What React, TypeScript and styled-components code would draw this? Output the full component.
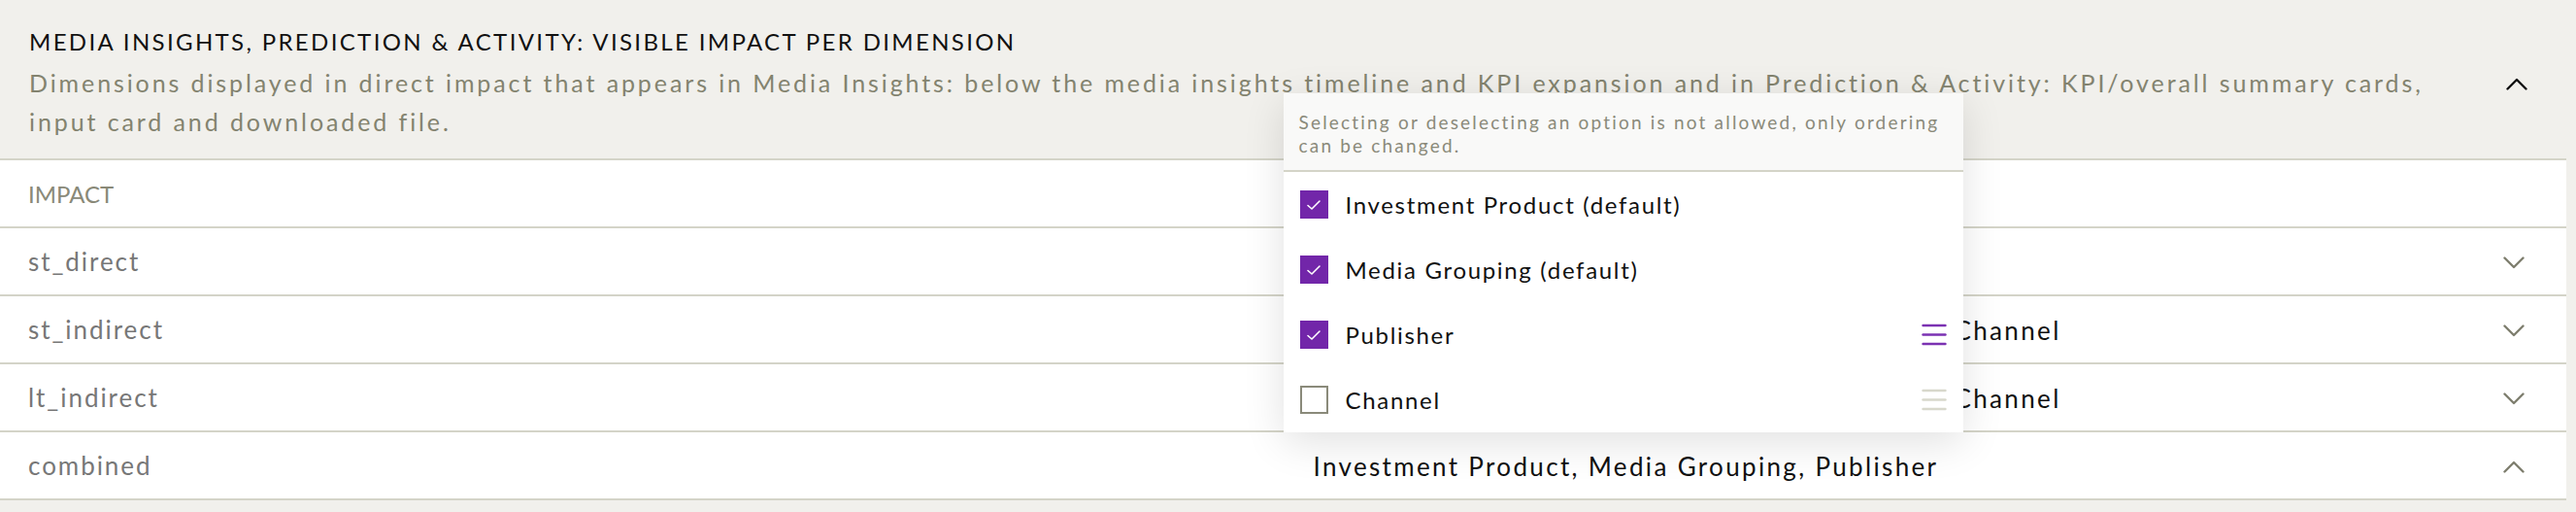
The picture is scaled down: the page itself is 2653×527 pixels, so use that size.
import React from "react";
import styled, { createGlobalStyle } from "styled-components";

const GlobalStyle = createGlobalStyle`
  html, body { margin: 0; padding: 0; }
  body {
    background: #f1f0ec;
    font-family: Lato, "Liberation Sans", sans-serif;
    color: #111111;
    -webkit-font-smoothing: antialiased;
  }
`;

const Page = styled.div`
  min-height: 100vh;
  padding-right: 10px;
  box-sizing: border-box;
  background: #f1f0ec;
`;

const Card = styled.section`
  display: flex;
  flex-direction: column;
`;

const Header = styled.header`
  display: flex;
  align-items: center;
  gap: 50px;
  padding: 27px 40px 18px 30px;
  border-bottom: 2px solid #d4d4c8;
`;

const HeaderText = styled.div`
  flex: 1;
  display: flex;
  flex-direction: column;
  gap: 6px;
`;

const Title = styled.h2`
  margin: 0;
  font-size: 24px;
  line-height: 32px;
  font-weight: 400;
  letter-spacing: 0.098em;
  color: #111111;
  text-transform: uppercase;
`;

const Description = styled.p`
  margin: 0;
  font-size: 25px;
  line-height: 40px;
  letter-spacing: 0.116em;
  color: #83836f;
`;

const Table = styled.div`
  display: flex;
  flex-direction: column;
  background: #ffffff;
`;

const Row = styled.div`
  display: grid;
  grid-template-columns: 1fr 1fr;
  height: 70px;
  border-bottom: 2px solid #d4d4c8;
  box-sizing: border-box;
`;

const HeadCell = styled.div`
  display: flex;
  align-items: center;
  padding-left: 29px;
  font-size: 24px;
  letter-spacing: 0;
  color: #898978;
  text-transform: uppercase;
`;

const LabelCell = styled.div`
  display: flex;
  align-items: center;
  padding-left: 29px;
  font-size: 26px;
  letter-spacing: 0.075em;
  color: #777777;
`;

const ValueCell = styled.div`
  position: relative;
  display: flex;
  align-items: center;
  justify-content: space-between;
  padding: 2px 43px 0 31px;
  font-size: 26px;
  letter-spacing: 0.09em;
  color: #111111;
`;

const ValueText = styled.span`
  white-space: nowrap;
`;

const ChevronSvg = styled.svg<{ $dark?: boolean }>`
  width: 22px;
  height: 13px;
  flex: none;
  stroke: ${(p) => (p.$dark ? "#111111" : "#7e7e6e")};
`;

const Dropdown = styled.div`
  position: absolute;
  left: 0;
  bottom: 100%;
  width: 700px;
  background: #ffffff;
  box-shadow: 0 10px 40px rgba(0, 0, 0, 0.12);
  display: flex;
  flex-direction: column;
  z-index: 2;
`;

const DropdownNote = styled.div`
  padding: 18px 8px 13px 16px;
  background: #f9f9f8;
  border-bottom: 2px solid #d4d4c8;
  font-size: 19px;
  line-height: 24px;
  letter-spacing: 0.115em;
  color: #8a8a7a;
`;

const OptionList = styled.ul`
  list-style: none;
  margin: 0;
  padding: 0;
`;

const Option = styled.li`
  display: flex;
  align-items: center;
  height: 67px;
  padding: 0 17px;
  gap: 18px;
  font-size: 24px;
  letter-spacing: 0.07em;
  color: #111111;
`;

const OptionLabel = styled.span`
  flex: 1;
`;

const Checkbox = styled.span<{ $checked: boolean }>`
  width: 29px;
  height: 29px;
  box-sizing: border-box;
  flex: none;
  display: flex;
  align-items: center;
  justify-content: center;
  background: ${(p) => (p.$checked ? "#7226a9" : "#ffffff")};
  border: 2px solid ${(p) => (p.$checked ? "#7226a9" : "#8a8a7a")};
`;

const HandleSvg = styled.svg<{ $active: boolean }>`
  width: 26px;
  height: 25px;
  flex: none;
  stroke: ${(p) => (p.$active ? "#7b32b2" : "#d8d8cc")};
`;

const Chevron = ({ up, dark }: { up?: boolean; dark?: boolean }) => (
  <ChevronSvg $dark={dark} viewBox="0 0 22 13" fill="none" strokeWidth={2.4} strokeLinecap="round" strokeLinejoin="round">
    {up ? <polyline points="1.5,11.5 11,2 20.5,11.5" /> : <polyline points="1.5,1.5 11,11 20.5,1.5" />}
  </ChevronSvg>
);

const Handle = ({ active }: { active: boolean }) => (
  <HandleSvg $active={active} viewBox="0 0 26 25" fill="none" strokeWidth={2.4} strokeLinecap="round">
    <line x1="1.5" y1="3" x2="24.5" y2="3" />
    <line x1="1.5" y1="12.5" x2="24.5" y2="12.5" />
    <line x1="1.5" y1="22" x2="24.5" y2="22" />
  </HandleSvg>
);

type Opt = { label: string; checked: boolean; draggable: boolean; active?: boolean };

const options: Opt[] = [
  { label: "Investment Product (default)", checked: true, draggable: false },
  { label: "Media Grouping (default)", checked: true, draggable: false },
  { label: "Publisher", checked: true, draggable: true, active: true },
  { label: "Channel", checked: false, draggable: true, active: false },
];

const rows = [
  { label: "st_direct", value: "Investment Product, Media Grouping", open: false },
  { label: "st_indirect", value: "Investment Product, Media Grouping, Publisher, Channel", open: false },
  { label: "lt_indirect", value: "Investment Product, Media Grouping, Publisher, Channel", open: false },
  { label: "combined", value: "Investment Product, Media Grouping, Publisher", open: true },
];

const OrderDropdown = () => (
  <Dropdown>
    <DropdownNote>
      Selecting or deselecting an option is not allowed, only ordering can be changed.
    </DropdownNote>
    <OptionList>
      {options.map((o) => (
        <Option key={o.label}>
          <Checkbox $checked={o.checked}>
            {o.checked && (
              <svg width="20" height="20" viewBox="0 0 20 20" fill="none" stroke="#ffffff" strokeWidth="1.6" strokeLinecap="round" strokeLinejoin="round">
                <polyline points="4,10.5 8,14 16,6" />
              </svg>
            )}
          </Checkbox>
          <OptionLabel>{o.label}</OptionLabel>
          {o.draggable && <Handle active={!!o.active} />}
        </Option>
      ))}
    </OptionList>
  </Dropdown>
);

export default function App() {
  return (
    <>
      <GlobalStyle />
      <Page>
        <Card>
          <Header>
            <HeaderText>
              <Title>Media Insights, Prediction &amp; Activity: Visible Impact per Dimension</Title>
              <Description>
                Dimensions displayed in direct impact that appears in Media Insights: below the media insights timeline
                and KPI expansion and in Prediction &amp; Activity: KPI/overall summary cards, input card and downloaded
                file.
              </Description>
            </HeaderText>
            <Chevron up dark />
          </Header>
          <Table>
            <Row>
              <HeadCell>Impact</HeadCell>
            </Row>
            {rows.map((r) => (
              <Row key={r.label}>
                <LabelCell>{r.label}</LabelCell>
                <ValueCell>
                  <ValueText>{r.value}</ValueText>
                  <Chevron up={r.open} />
                  {r.open && <OrderDropdown />}
                </ValueCell>
              </Row>
            ))}
          </Table>
        </Card>
      </Page>
    </>
  );
}
